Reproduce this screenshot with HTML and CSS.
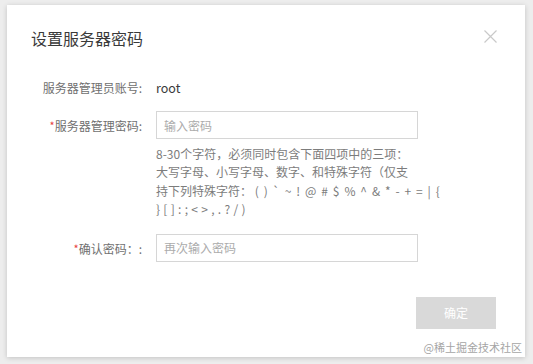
FILE: index.html
```html
<!DOCTYPE html>
<html lang="zh-CN">
<head>
<meta charset="utf-8">
<title>设置服务器密码</title>
<link rel="stylesheet" href="styles.css">
</head>
<body>
<div class="dialog">
  <div class="header">
    <h2 class="title">设置服务器密码</h2>
    <span class="close" aria-label="关闭">
      <svg width="13" height="13" viewBox="0 0 13 13"><path d="M0.5 0.5L12.5 12.5M12.5 0.5L0.5 12.5" stroke="#c9c9c9" stroke-width="1.2" fill="none"/></svg>
    </span>
  </div>
  <div class="form">
    <div class="label row1">服务器管理员账号:</div>
    <div class="value row1">root</div>

    <div class="label row2"><span class="req">*</span>服务器管理密码:</div>
    <div class="field">
      <div class="input"><span class="ph">输入密码</span></div>
      <p class="help">8-30个字符，必须同时包含下面四项中的三项：<br>大写字母、小写字母、数字、和特殊字符（仅支<br>持下列特殊字符： <span class="sym">( ) ` ~ ! @ # $ % ^ &amp; * - + = | {</span><br><span class="sym2">} [ ] : ; &lt; &gt; , . ? / )</span></p>
    </div>

    <div class="label row3"><span class="req">*</span>确认密码：:</div>
    <div class="field">
      <div class="input"><span class="ph">再次输入密码</span></div>
    </div>
  </div>
  <div class="footer">
    <button class="btn">确定</button>
  </div>
  <div class="watermark">@稀土掘金技术社区</div>
</div>
</body>
</html>
```
FILE: styles.css
```css
html, body {
  margin: 0;
  padding: 0;
}
body {
  background: #ededed;
  width: 533px;
  height: 364px;
  overflow: hidden;
  font-family: "Noto Sans CJK SC", "Noto Sans", sans-serif;
  font-size: 12px;
  color: #666;
}
.dialog {
  position: relative;
  box-sizing: border-box;
  margin: 5px 0 0 7px;
  width: 518px;
  height: 352px;
  background: #fff;
  box-shadow: 0 1px 5px rgba(0,0,0,0.18);
}
.header {
  display: flex;
  justify-content: space-between;
  align-items: flex-start;
  padding: 22px 28px 0 24px;
}
.title {
  margin: 0;
  font-size: 16px;
  line-height: 22px;
  font-weight: normal;
  color: #3a3a3a;
}
.close {
  display: flex;
  margin-top: 3px;
}
.form {
  display: grid;
  grid-template-columns: 135px 262px;
  column-gap: 14px;
  margin-top: 29px;
  align-items: start;
}
.label {
  text-align: right;
  line-height: 20px;
  white-space: nowrap;
  color: #707070;
}
.value {
  line-height: 20px;
  color: #3a3a3a;
  font-size: 12.5px;
}
.row1 {
  margin-bottom: 13px;
}
.row2 {
  margin-top: 4px;
}
.row3 {
  margin-top: 4px;
}
.req {
  color: #e8423a;
  font-size: 11px;
  vertical-align: 1px;
}
.input {
  box-sizing: border-box;
  height: 28px;
  border: 1px solid #d6d6d6;
  padding: 0 7px;
  display: flex;
  align-items: center;
}
.ph {
  color: #ababab;
}
.help {
  margin: 6px 0 15px;
  line-height: 18.4px;
  color: #7c7c7c;
  white-space: nowrap;
}
.sym {
  word-spacing: 2.2px;
}
.sym2 {
  word-spacing: 0.6px;
}
.footer {
  display: flex;
  justify-content: flex-end;
  padding-right: 29px;
  margin-top: 35px;
}
.btn {
  width: 80px;
  height: 32px;
  border: 0;
  background: #d9d9d9;
  color: #fff;
  font-family: inherit;
  font-size: 12px;
  padding: 0;
}
.watermark {
  position: absolute;
  right: 3px;
  bottom: 3px;
  font-size: 11px;
  line-height: 14px;
  color: #a5a5a5;
}
```
